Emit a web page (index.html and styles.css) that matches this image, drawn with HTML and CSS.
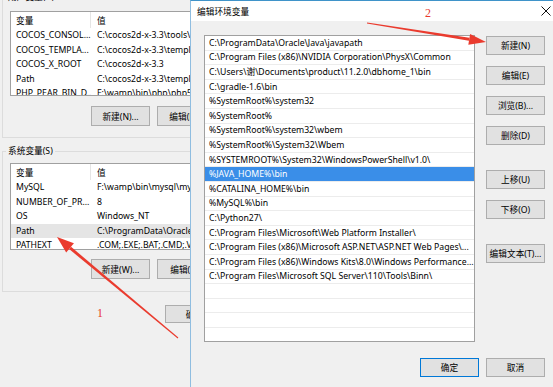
FILE: index.html
```html
<!DOCTYPE html>
<html lang="zh-CN">
<head>
<meta charset="utf-8">
<title>编辑环境变量</title>
<link rel="stylesheet" href="styles.css">
</head>
<body>
<div class="envwin">
  <fieldset class="grp grp-user">
    <legend>用户变量(U)</legend>
    <div class="lv lv-user">
      <div class="lv-head"><span class="c1">变量</span><span class="c2">值</span></div>
      <div class="lv-row"><span class="c1">COCOS_CONSOL...</span><span class="c2">C:\cocos2d-x-3.3\tools\cocos2d-console\bin</span></div>
      <div class="lv-row"><span class="c1">COCOS_TEMPLA...</span><span class="c2">C:\cocos2d-x-3.3\templates</span></div>
      <div class="lv-row"><span class="c1">COCOS_X_ROOT</span><span class="c2">C:\cocos2d-x-3.3</span></div>
      <div class="lv-row"><span class="c1">Path</span><span class="c2">C:\cocos2d-x-3.3\templates;F:\wamp</span></div>
      <div class="lv-row"><span class="c1">PHP_PEAR_BIN_D...</span><span class="c2">F:\wamp\bin\php\php5.5.12</span></div>
    </div>
    <div class="btnrow btnrow-user"><button class="btn">新建(N)...</button><button class="btn">编辑(E)...</button></div>
  </fieldset>
  <fieldset class="grp grp-sys">
    <legend>系统变量(S)</legend>
    <div class="lv lv-sys">
      <div class="lv-head"><span class="c1">变量</span><span class="c2">值</span></div>
      <div class="lv-row"><span class="c1">MySQL</span><span class="c2">F:\wamp\bin\mysql\mysql5.6.17\bin</span></div>
      <div class="lv-row"><span class="c1">NUMBER_OF_PR...</span><span class="c2">8</span></div>
      <div class="lv-row"><span class="c1">OS</span><span class="c2">Windows_NT</span></div>
      <div class="lv-row hover"><span class="c1">Path</span><span class="c2">C:\ProgramData\Oracle\Java\javapath</span></div>
      <div class="lv-row"><span class="c1">PATHEXT</span><span class="c2">.COM;.EXE;.BAT;.CMD;.VBS;.VBE</span></div>
    </div>
    <div class="btnrow btnrow-sys"><button class="btn">新建(W)...</button><button class="btn">编辑(I)...</button></div>
  </fieldset>
  <div class="envbtns"><button class="btn btn-sm">确定</button><button class="btn btn-sm">取消</button></div>
</div>

<div class="dlg">
  <div class="dlg-title">
    <span class="dlg-caption">编辑环境变量</span>
    <span class="dlg-close"><svg width="10" height="10" viewBox="0 0 10 10"><path d="M0.5 0.5L9.5 9.5M9.5 0.5L0.5 9.5" stroke="#111" stroke-width="1" fill="none"/></svg></span>
  </div>
  <div class="dlg-body">
    <div class="lb">
      <div class="lb-row">C:\ProgramData\Oracle\Java\javapath</div>
      <div class="lb-row">C:\Program Files (x86)\NVIDIA Corporation\PhysX\Common</div>
      <div class="lb-row">C:\Users\谢\Documents\product\11.2.0\dbhome_1\bin</div>
      <div class="lb-row">C:\gradle-1.6\bin</div>
      <div class="lb-row">%SystemRoot%\system32</div>
      <div class="lb-row">%SystemRoot%</div>
      <div class="lb-row">%SystemRoot%\system32\wbem</div>
      <div class="lb-row">%SystemRoot%\System32\Wbem</div>
      <div class="lb-row">%SYSTEMROOT%\System32\WindowsPowerShell\v1.0\</div>
      <div class="lb-row sel">%JAVA_HOME%\bin</div>
      <div class="lb-row">%CATALINA_HOME%\bin</div>
      <div class="lb-row">%MySQL%\bin</div>
      <div class="lb-row">C:\Python27\</div>
      <div class="lb-row">C:\Program Files\Microsoft\Web Platform Installer\</div>
      <div class="lb-row">C:\Program Files (x86)\Microsoft ASP.NET\ASP.NET Web Pages\...</div>
      <div class="lb-row">C:\Program Files (x86)\Windows Kits\8.0\Windows Performance...</div>
      <div class="lb-row">C:\Program Files\Microsoft SQL Server\110\Tools\Binn\</div>
      <div class="lb-row"></div>
      <div class="lb-row"></div>
      <div class="lb-row"></div>
      <div class="lb-row"></div>
    </div>
    <div class="side">
      <button class="btn btn-d">新建(N)</button>
      <button class="btn btn-d">编辑(E)</button>
      <button class="btn btn-d">浏览(B)...</button>
      <button class="btn btn-d">删除(D)</button>
      <button class="btn btn-d sep">上移(U)</button>
      <button class="btn btn-d">下移(O)</button>
      <button class="btn btn-d sep">编辑文本(T)...</button>
    </div>
    <div class="dlg-foot">
      <button class="btn btn-d default">确定</button>
      <button class="btn btn-d">取消</button>
    </div>
  </div>
</div>

<svg class="marks" width="553" height="387" viewBox="0 0 553 387">
  <polygon points="178.32,337.62 71.02,246.75 69.10,249.05 177.68,338.38" fill="#ea3b2e"/>
  <polygon points="57,237 73.91,243.29 66.21,252.51" fill="#ea3b2e"/>
  <polygon points="366.92,23.49 468.97,40.80 469.45,37.84 367.08,22.51" fill="#ea3b2e"/>
  <polygon points="486,42 468.34,44.75 470.08,33.89" fill="#ea3b2e"/>
</svg>
<span class="num num1">1</span>
<span class="num num2">2</span>
</body>
</html>
```

FILE: styles.css
```css
* { box-sizing: border-box; }

body {
  margin: 0;
  width: 553px;
  height: 387px;
  overflow: hidden;
  position: relative;
  background: #f0f0f0;
  color: #000;
  font-family: "Noto Sans", "Noto Sans CJK SC", sans-serif;
  font-size: 8.7px;
}

/* background window, visible only up to the dialog's left edge */
.envwin {
  width: 190px;
  overflow: hidden;
}

.grp {
  border: 1px solid #dcdcdc;
  margin: 0 0 0 2px;
  min-width: 0;
  width: 380px;
}

.grp legend {
  padding: 0 2px;
  margin-left: -4px;
  height: 16px;
  line-height: 16px;
}

.grp-user {
  margin-top: -11px;
  padding: 6px 7px 11px;
}

.grp-sys {
  margin-top: 5px;
  padding: 4px 7px 12px;
}

.lv {
  background: #fff;
  border: 1px solid #a0a0a0;
  overflow: hidden;
}

.lv-user { height: 85px; }
.lv-sys { height: 87px; }

.lv-head {
  display: flex;
  height: 16px;
  white-space: nowrap;
}

.lv-head span {
  display: flex;
  align-items: center;
}

.lv-head .c1 {
  border-right: 1px solid #e5e5e5;
}

.lv-row {
  display: flex;
  align-items: center;
  height: 14.5px;
  white-space: nowrap;
}

.lv-row.hover {
  background: #e5e5e5;
}

.c1 {
  flex: none;
  width: 80px;
  padding-left: 5px;
  overflow: hidden;
}

.c2 {
  padding-left: 6px;
}

.btnrow {
  display: flex;
  gap: 7px;
  padding-left: 81px;
}

.btnrow-user { margin-top: 10px; }
.btnrow-sys { margin-top: 9px; }

.btn {
  flex: none;
  width: 59px;
  height: 20px;
  padding: 0;
  background: #e1e1e1;
  border: 1px solid #adadad;
  color: #000;
  font: inherit;
  white-space: nowrap;
}

.btn-sm { height: 18px; }

.envbtns {
  display: flex;
  gap: 7px;
  margin-top: 13px;
  padding-left: 165px;
}

/* dialog window */
.dlg {
  position: absolute;
  left: 190px;
  top: 0;
  width: 380px;
  height: 400px;
  background: #f0f0f0;
  border: 1px solid #8fbde0;
  border-top-color: #3f93c9;
}

.dlg-title {
  height: 20px;
  background: #fff;
  display: flex;
  align-items: center;
  justify-content: space-between;
  padding-left: 6px;
}

.dlg-close {
  width: 46px;
  height: 20px;
  display: flex;
  align-items: center;
  justify-content: center;
}

.dlg-close svg { display: block; }

.dlg-body {
  display: grid;
  grid-template-columns: 271px 59px;
  column-gap: 11px;
  padding: 14px 0 0 13px;
}

.lb {
  height: 307px;
  background: #fff;
  border: 1px solid #a0a0a0;
  overflow: hidden;
}

.lb-row {
  height: 14.6px;
  border-bottom: 1px solid #ececec;
  padding-left: 4px;
  display: flex;
  align-items: center;
  white-space: nowrap;
  overflow: hidden;
}

.lb-row.sel {
  background: #3a8ee8;
  color: #fff;
}

.side {
  display: flex;
  flex-direction: column;
  gap: 11px;
  padding-top: 1px;
}

.btn-d { height: 19px; }

.side .sep { margin-top: 14px; }

.dlg-foot {
  grid-column: 1 / -1;
  display: flex;
  justify-content: flex-end;
  gap: 7px;
  margin-top: 16px;
}

.btn.default { border-color: #0078d7; }

/* annotations */
.marks {
  position: absolute;
  left: 0;
  top: 0;
  pointer-events: none;
}

.num {
  position: absolute;
  color: #e8392c;
  font-family: "Liberation Serif", serif;
  font-size: 12px;
  line-height: 12px;
}

.num1 { left: 97px; top: 307px; }
.num2 { left: 425px; top: 7px; }
```
